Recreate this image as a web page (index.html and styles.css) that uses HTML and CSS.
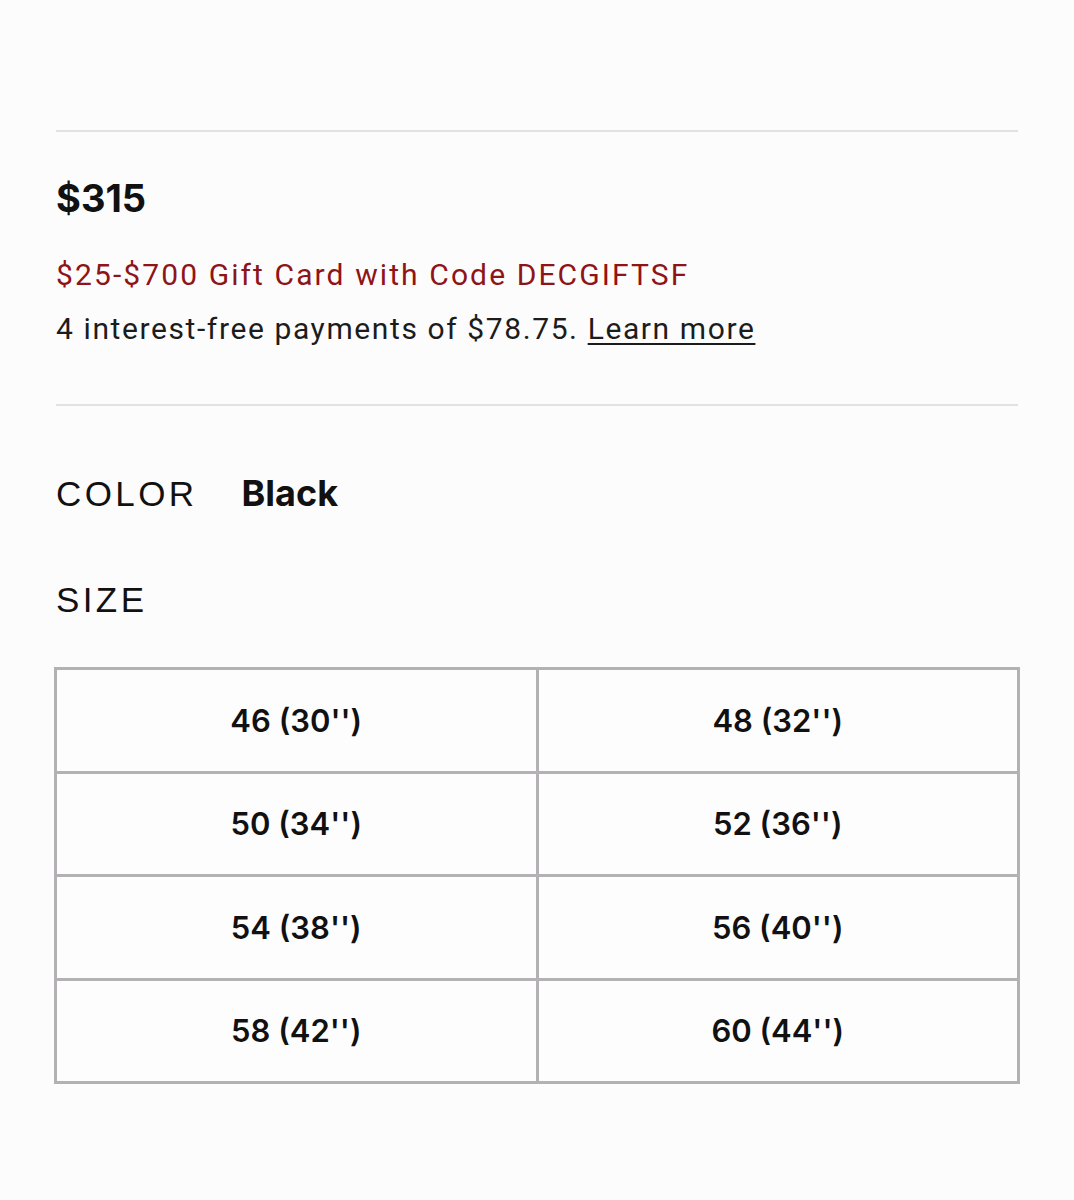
FILE: index.html
```html
<!DOCTYPE html>
<html>
<head>
<meta charset="utf-8">
<link rel="stylesheet" href="styles.css">
</head>
<body>
<main class="page">
  <hr class="rule rule-top">
  <section class="pricing">
    <div class="price">$315</div>
    <div class="promo">$25-$700 Gift Card with Code DECGIFTSF</div>
    <div class="installments">4 interest-free payments of $78.75. <a class="learn" href="#">Learn more</a></div>
  </section>
  <hr class="rule">
  <section class="options">
    <div class="color-row"><span class="label">COLOR</span><span class="value">Black</span></div>
    <div class="label size-label">SIZE</div>
    <div class="size-grid">
      <button class="size">46 (30'')</button>
      <button class="size">48 (32'')</button>
      <button class="size">50 (34'')</button>
      <button class="size">52 (36'')</button>
      <button class="size">54 (38'')</button>
      <button class="size">56 (40'')</button>
      <button class="size">58 (42'')</button>
      <button class="size">60 (44'')</button>
    </div>
  </section>
</main>
</body>
</html>
```

FILE: styles.css
```css
html, body {
  margin: 0;
  padding: 0;
  background: #fdfcfd;
}
.page {
  padding: 130px 56px 0 56px;
  min-height: 1070px;
  font-family: Roboto, "Liberation Sans", sans-serif;
  color: #151515;
}
.rule {
  border: none;
  height: 2px;
  background: #e2e2e2;
  margin: 0;
}
.pricing {
  padding: 42px 0 55px;
}
.price {
  font-family: Inter, "Liberation Sans", sans-serif;
  font-weight: 700;
  font-size: 38px;
  line-height: 48px;
  color: #111;
}
.promo {
  margin-top: 33px;
  font-size: 30px;
  line-height: 40px;
  letter-spacing: 2.1px;
  color: #8e1418;
}
.installments {
  margin-top: 14px;
  font-size: 30px;
  line-height: 40px;
  letter-spacing: 1.6px;
  color: #1c1c1c;
}
.learn {
  color: #1c1c1c;
  text-decoration: underline;
  text-underline-offset: 4px;
  text-decoration-thickness: 2px;
}
.options {
  padding-top: 65px;
}
.color-row {
  display: flex;
  align-items: baseline;
  gap: 44px;
}
.label {
  font-family: "Liberation Sans", Arial, sans-serif;
  font-size: 35px;
  line-height: 44px;
  letter-spacing: 3.4px;
  color: #111;
}
.value {
  font-family: Inter, "Liberation Sans", sans-serif;
  font-weight: 700;
  font-size: 36px;
  line-height: 44px;
  color: #111;
}
.size-label {
  margin-top: 62px;
}
.size-grid {
  margin: 45px -2px 0;
  display: grid;
  grid-template-columns: 1fr 1fr;
  grid-auto-rows: 100.5px;
  gap: 3px;
  background: #b3b1b3;
  border: 3px solid #b3b1b3;
}
.size {
  border: none;
  background: #fefdfe;
  font-family: Inter, "Liberation Sans", sans-serif;
  font-weight: 600;
  font-size: 31px;
  color: #111;
  padding: 0;
  display: flex;
  align-items: center;
  justify-content: center;
}
```
